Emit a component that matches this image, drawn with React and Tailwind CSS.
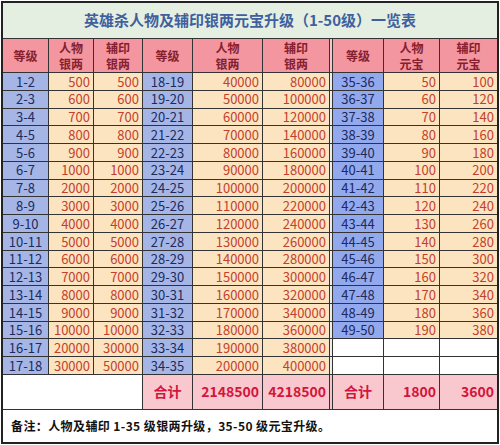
const rows = [
  ['1-2', '500', '500', '18-19', '40000', '80000', '35-36', '50', '100'],
  ['2-3', '600', '600', '19-20', '50000', '100000', '36-37', '60', '120'],
  ['3-4', '700', '700', '20-21', '60000', '120000', '37-38', '70', '140'],
  ['4-5', '800', '800', '21-22', '70000', '140000', '38-39', '80', '160'],
  ['5-6', '900', '900', '22-23', '80000', '160000', '39-40', '90', '180'],
  ['6-7', '1000', '1000', '23-24', '90000', '180000', '40-41', '100', '200'],
  ['7-8', '2000', '2000', '24-25', '100000', '200000', '41-42', '110', '220'],
  ['8-9', '3000', '3000', '25-26', '110000', '220000', '42-43', '120', '240'],
  ['9-10', '4000', '4000', '26-27', '120000', '240000', '43-44', '130', '260'],
  ['10-11', '5000', '5000', '27-28', '130000', '260000', '44-45', '140', '280'],
  ['11-12', '6000', '6000', '28-29', '140000', '280000', '45-46', '150', '300'],
  ['12-13', '7000', '7000', '29-30', '150000', '300000', '46-47', '160', '320'],
  ['13-14', '8000', '8000', '30-31', '160000', '320000', '47-48', '170', '340'],
  ['14-15', '9000', '9000', '31-32', '170000', '340000', '48-49', '180', '360'],
  ['15-16', '10000', '10000', '32-33', '180000', '360000', '49-50', '190', '380'],
  ['16-17', '20000', '30000', '33-34', '190000', '380000', '', '', ''],
  ['17-18', '30000', '50000', '34-35', '200000', '400000', '', '', ''],
];

const Head = ({ children }) => (
  <div className="bg-[#f3969f] text-[#86202e] font-bold text-[12px] leading-[16px] flex flex-col items-center justify-center">
    {children}
  </div>
);

const Level = ({ v, alt }) => (
  <div className={`${alt ? 'bg-[#93a9ee]' : 'bg-[#a5b6e6]'} text-[#1d2a5c] text-[13px] flex items-center justify-center`}>
    {v}
  </div>
);

const Num = ({ v }) => (
  <div className="bg-[#fce4c1] text-[#c2412c] text-[13px] flex items-center justify-end pr-[3px]">{v}</div>
);

const Empty = () => <div className="bg-white" />;

const Total = ({ children }) => (
  <div className="bg-[#f8c8ce] text-[#d4143c] font-bold text-[14px] flex items-center justify-end pr-[3px]">{children}</div>
);

export default function App() {
  return (
    <div className="w-[500px] h-[445px] bg-white pt-px pl-px" style={{ fontFamily: '"Noto Sans CJK SC", "Noto Sans", sans-serif' }}>
      <div className="w-[498px] h-[443px] border-2 border-[#222] flex flex-col">
        <div className="h-[36px] border-b border-[#333] bg-[#e5efe1] flex items-center justify-center text-[#3f5f9e] font-bold text-[15px]">
          英雄杀人物及辅印银两元宝升级（1-50级）一览表
        </div>
        <div className="h-[370px] grid grid-cols-[45px_44px_48px_49px_69px_66px_2px_50px_55px_57px] grid-rows-[33px_repeat(17,minmax(0,1fr))_34px] gap-px bg-[#333]">
          <Head>等级</Head>
          <Head><span>人物</span><span>银两</span></Head>
          <Head><span>辅印</span><span>银两</span></Head>
          <Head>等级</Head>
          <Head><span>人物</span><span>银两</span></Head>
          <Head><span>辅印</span><span>银两</span></Head>
          <div className="bg-[#f3c6cb]" />
          <Head>等级</Head>
          <Head><span>人物</span><span>元宝</span></Head>
          <Head><span>辅印</span><span>元宝</span></Head>
          {rows.map((r, i) => (
            <div key={i} className="contents">
              <Level v={r[0]} />
              <Num v={r[1]} />
              <Num v={r[2]} />
              <Level v={r[3]} />
              <Num v={r[4]} />
              <Num v={r[5]} />
              <div className="bg-[#eeeeee]" />
              {r[6] ? <Level v={r[6]} alt /> : <Empty />}
              {r[7] ? <Num v={r[7]} /> : <Empty />}
              {r[8] ? <Num v={r[8]} /> : <Empty />}
            </div>
          ))}
          <div className="col-span-3 bg-white" />
          <div className="bg-[#f8c8ce] text-[#d4143c] font-bold text-[14px] flex items-center justify-center">合计</div>
          <Total>2148500</Total>
          <Total>4218500</Total>
          <div className="bg-[#f3c6cb]" />
          <div className="bg-[#f8c8ce] text-[#d4143c] font-bold text-[14px] flex items-center justify-center">合计</div>
          <Total>1800</Total>
          <Total>3600</Total>
        </div>
        <div className="flex-1 border-t border-[#333] bg-white flex items-center pl-[8px] text-[12px] font-bold text-[#111] tracking-[0.4px]">
          备注：人物及辅印 1-35 级银两升级，35-50 级元宝升级。
        </div>
      </div>
    </div>
  );
}
